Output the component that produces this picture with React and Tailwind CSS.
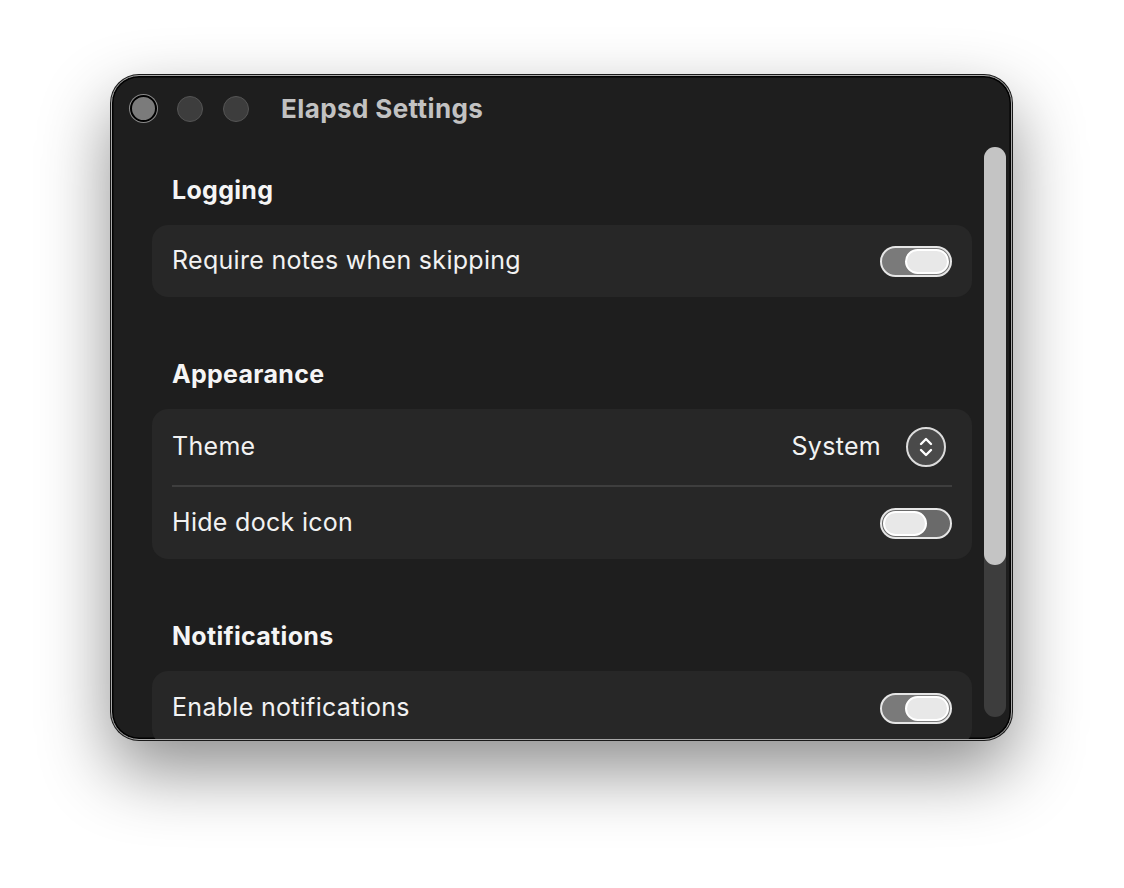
import React from 'react';

const font = { fontFamily: 'Inter, "Noto Sans", sans-serif' };

const Toggle = ({ on }) => {
  return (
    <div
      className={`flex h-[31px] w-[72px] items-center rounded-full border-2 border-[#e6e6e6] p-[1px] ${
        on ? 'justify-end bg-[#7a7a7a]' : 'justify-start bg-[#6a6a6a]'
      }`}
    >
      <div className="h-[25px] w-[44px] rounded-full border-2 border-white bg-[#e8e8e8]" />
    </div>
  );
};

const Stepper = () => {
  return (
    <div className="flex h-[40px] w-[40px] items-center justify-center rounded-full border-2 border-[#dcdcdc] bg-[#4a4a4a]">
      <svg width="16" height="22" viewBox="0 0 16 22" fill="none">
        <path d="M3 8 L8 3 L13 8" stroke="white" strokeWidth="2.4" strokeLinecap="round" strokeLinejoin="round" />
        <path d="M3 14 L8 19 L13 14" stroke="white" strokeWidth="2.4" strokeLinecap="round" strokeLinejoin="round" />
      </svg>
    </div>
  );
};

const Row = ({ label, className, children }) => {
  return (
    <div className={`flex items-center justify-between px-5 ${className}`}>
      <span className="text-[25px] tracking-[0.3px] text-[#f2f2f2]">{label}</span>
      {children}
    </div>
  );
};

const Section = ({ title, className, children }) => {
  return (
    <section className={className}>
      <h2 className="mb-5 pl-5 text-[25px] font-bold leading-[29px] tracking-[0.3px] text-[#f5f5f5]">{title}</h2>
      <div className="overflow-hidden rounded-2xl bg-[#272727]">{children}</div>
    </section>
  );
};

const App = () => {
  return (
    <div className="min-h-[888px] bg-white pl-[111px] pt-[75px]" style={font}>
      <div className="relative h-[665px] w-[901px] overflow-hidden rounded-[28px] border-[1.5px] border-[#a8a8a8] bg-[#1e1e1e] shadow-[0_0_0_1px_#1a1a1a,inset_0_0_0_1.5px_#000,0_30px_70px_rgba(0,0,0,0.45)]">
        <div className="flex h-[65px] items-center pl-[18px]">
          <div className="flex items-center gap-[20px]">
            <div className="h-[27px] w-[27px] rounded-full border-2 border-black bg-[#7b7b7b] shadow-[0_0_0_1px_#8a8a8a]" />
            <div className="h-[26px] w-[26px] rounded-full border-[1.5px] border-[#555] bg-[#3d3d3d]" />
            <div className="h-[26px] w-[26px] rounded-full border-[1.5px] border-[#555] bg-[#3d3d3d]" />
          </div>
          <span className="ml-[32px] text-[26px] font-bold tracking-[0.4px] text-[#c2c2c2]">Elapsd Settings</span>
        </div>

        <div className="w-[860px] pl-[40px] pt-[35px]">
          <Section title="Logging">
            <Row label="Require notes when skipping" className="h-[72px]">
              <Toggle on />
            </Row>
          </Section>

          <Section title="Appearance" className="mt-[63px]">
            <Row label="Theme" className="h-[76px]">
              <div className="mr-[6px] flex items-center gap-[25px]">
                <span className="text-[25px] tracking-[0.3px] text-[#f2f2f2]">System</span>
                <Stepper />
              </div>
            </Row>
            <div className="mx-5 h-[2px] bg-[#3e3e3e]" />
            <Row label="Hide dock icon" className="h-[72px]">
              <Toggle />
            </Row>
          </Section>

          <Section title="Notifications" className="mt-[63px]">
            <Row label="Enable notifications" className="h-[74px]">
              <Toggle on />
            </Row>
          </Section>
        </div>

        <div className="absolute bottom-[22px] right-[5px] top-[71px] w-[22px] rounded-full bg-[#3d3d3d]">
          <div className="h-[418px] rounded-full bg-[#c4c4c4]" />
        </div>
      </div>
    </div>
  );
};

export default App;
